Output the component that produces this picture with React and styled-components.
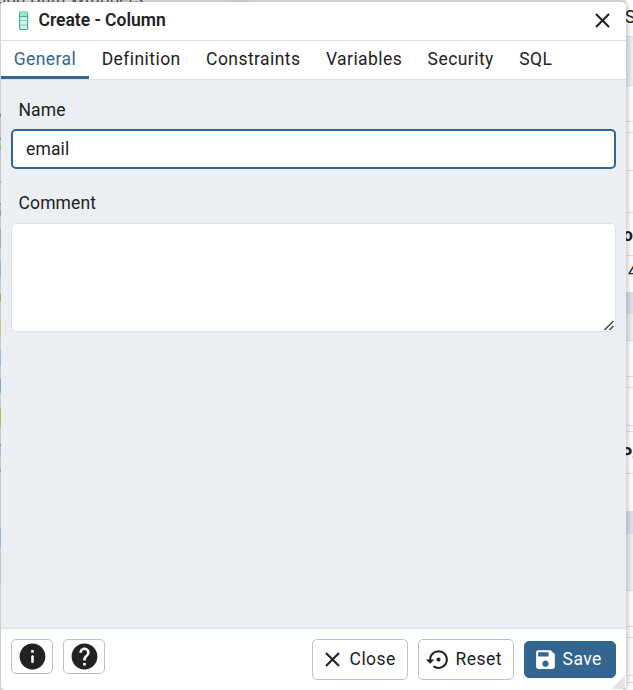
import React from 'react';
import styled, { createGlobalStyle, css } from 'styled-components';
import { MdClose, MdSettingsBackupRestore, MdSave, MdHelp } from 'react-icons/md';

const Global = createGlobalStyle`
  *, *::before, *::after { box-sizing: border-box; }
  html, body { margin: 0; height: 690px; overflow: hidden; background: #fff; }
  body, button, input, textarea {
    font-family: Roboto, sans-serif;
    font-size: 17.5px;
    letter-spacing: 0.13px;
    color: #222;
  }
`;

const Screen = styled.div`
  position: relative;
  width: 633px;
  height: 690px;
  overflow: hidden;
  background: #fff;
`;

const Workspace = styled.div`
  display: grid;
  grid-template-columns: 225px 25px 1fr 7px;
  height: 690px;
`;

const Tree = styled.div`
  height: 690px;
  overflow: hidden;
  background: linear-gradient(#e6e6e6 110px, #d8d9db 110px 114px, #999 114px 117px, #d8d9db 117px 137px,
    #aaa 137px 140px, #d8d9db 140px 145px, #b1ca77 145px 149px, #c5d7e7 149px 157px, #ddd 157px 181px,
    #eaa5a5 181px 183px, #ddd 183px 203px, #e09a9a 203px 205px, #c5cfdd 205px 210px, #bba992 210px 216px,
    #ddd 216px 229px, #bbb 229px 248px, #ddd 248px 261px, #a5cadf 261px 277px, #ddd 277px 294px,
    #a7c272 294px 301px, #ddd 301px 319px, #e2d684 319px 336px, #ddd 336px 350px, #abcce6 350px 366px,
    #ddd 366px 379px, #92bfcd 379px 393px, #ddd 393px 408px, #bdd66c 408px 427px, #ddd 427px 444px,
    #aaa 444px 446px, #c6d0de 446px 457px, #ddd 457px 469px, #9dbecc 469px 472px, #d0e2de 472px 485px,
    #ddd 485px 528px, #a7cbe6 528px 547px, #ddd 547px 551px, #cfdde1 551px 584px, #e3e3e3 584px);
`;

const TreeLabel = styled.div`
  margin: -12px 0 0 -7px;
  font-size: 17px;
  line-height: 20px;
  white-space: nowrap;
  color: #555;
`;

const Splitter = styled.div`
  background: #dedfe3;
`;

const Canvas = styled.div`
  background: #e8e8e8;
`;

const Properties = styled.div`
  overflow: hidden;
`;

const PropertyRow = styled.div`
  display: flex;
  align-items: center;
  height: ${({ $h }) => $h}px;
  padding-top: ${({ $drop }) => $drop || 0}px;
  padding-bottom: ${({ $lift }) => $lift || 0}px;
  border-bottom: 1px solid #dde0e6;
  background: ${({ $bg }) => $bg || '#fff'};
  font-weight: ${({ $bold }) => ($bold ? 700 : 400)};
  text-indent: ${({ $shift }) => $shift || 0}px;
  line-height: 20px;
  white-space: nowrap;
`;

const Dialog = styled.section`
  position: absolute;
  left: 1px;
  top: 2px;
  width: 625px;
  height: 688px;
  display: flex;
  flex-direction: column;
  overflow: hidden;
  border-radius: 5px;
  background: #ebeef3;
`;

const DialogShadow = styled.div`
  position: absolute;
  left: 1px;
  top: 2px;
  width: 625px;
  height: 688px;
  border-radius: 5px;
  box-shadow: 1px 0 6px rgba(0, 0, 0, 0.28);
`;

const Header = styled.header`
  display: flex;
  align-items: center;
  height: 39px;
  padding: 0 16px 1px 17px;
  background: #fff;
  border-bottom: 1px solid #dde0e6;
`;

const Title = styled.h1`
  flex: 1;
  margin: -1px 0 0 9.5px;
  font-size: 17.5px;
  font-weight: 600;
  letter-spacing: -0.02px;
`;

const IconButton = styled.button`
  display: flex;
  padding: 0;
  border: 0;
  background: none;
  margin-right: -4.5px;
  svg { width: 25px; height: 25px; }
`;

const TabBar = styled.nav`
  display: flex;
  height: 39px;
  background: #fff;
  border-bottom: 1px solid #dde0e6;
`;

const Tab = styled.button`
  height: 38px;
  padding: 2px 12.7px 0;
  border: 0;
  border-bottom: 3px solid transparent;
  background: none;
  line-height: 33px;
  letter-spacing: 0.44px;
  ${({ $active }) => $active && css`
    color: #326690;
    border-color: #326690;
  `}
`;

const Form = styled.main`
  flex: 1;
  display: flex;
  flex-direction: column;
  padding: 17px 10px 0;
`;

const Label = styled.label`
  height: 32px;
  padding: 3px 7.5px 0;
  line-height: 20px;
`;

const TextInput = styled.input`
  height: 40px;
  margin-bottom: 21px;
  padding: 0 13px;
  border: 2px solid #326690;
  border-radius: 5px;
  background: #fff;
  outline: 0;
`;

const CommentBox = styled.div`
  display: flex;
  align-items: flex-end;
  justify-content: flex-end;
  height: 109px;
  margin-top: 1px;
  border: 1px solid #dde0e6;
  border-radius: 5px;
  background: #fff;
`;

const Footer = styled.footer`
  display: flex;
  height: 62px;
  padding: 10px 10px 0;
  gap: 10px;
  border-top: 1px solid #dde0e6;
  background: #fff;
`;

const HelpButton = styled.button`
  display: flex;
  align-items: center;
  justify-content: center;
  width: 42px;
  height: 35px;
  padding: 0;
  border: 1px solid #bac1cd;
  border-radius: 5px;
  background: #fff;
  svg { width: 31px; height: 31px; flex: none; }
`;

const ActionButton = styled.button`
  display: flex;
  align-items: center;
  width: ${({ $w }) => $w}px;
  height: ${({ $primary }) => ($primary ? 37 : 41)}px;
  margin-top: ${({ $primary }) => ($primary ? 2 : 0)}px;
  padding: 0 0 1px ${({ $primary }) => ($primary ? 8 : 7)}px;
  gap: 4.6px;
  border: 1px solid ${({ $primary }) => ($primary ? '#326690' : '#bac1cd')};
  border-radius: 5px;
  background: ${({ $primary }) => ($primary ? '#326690' : '#fff')};
  color: ${({ $primary }) => ($primary ? '#fff' : '#222')};
  letter-spacing: 0.42px;
  svg { width: 25px; height: 25px; flex: none; }
`;

const Spacer = styled.div`
  flex: 1;
`;

const ResizeCorner = styled.div`
  position: absolute;
  right: 1px;
  bottom: 1px;
  width: 13px;
  height: 13px;
  background: linear-gradient(135deg, transparent 50%, #e3e3e3 50%);
`;

const ColumnIcon = () => (
  <svg width="11" height="20" viewBox="0 0 11 20">
    <rect x="1.6" y="1" width="8" height="17.5" rx="1" fill="#d3f2ea" stroke="#34b495" strokeWidth="1.2" />
    <path d="M2 1.5h7.2v3.5h-7.2z" fill="#a5e1d1" />
    <path d="M1.6 5.5h8" stroke="#34b495" strokeWidth="1.2" />
    <path d="M2 9.5h7.2M2 14h7.2" stroke="#7bd0bb" strokeWidth="1" />
  </svg>
);

const InfoIcon = () => (
  <svg viewBox="0 0 24 24" fill="currentColor">
    <path d="M12 2C6.48 2 2 6.48 2 12s4.48 10 10 10 10-4.48 10-10S17.52 2 12 2zm0 15c-.55 0-1-.45-1-1v-4c0-.55.45-1 1-1s1 .45 1 1v4c0 .55-.45 1-1 1zm1-8h-2V7h2v2z" />
  </svg>
);

const Grip = () => (
  <svg width="13" height="13" viewBox="0 0 13 13" stroke="#444" strokeWidth="1.5">
    <path d="M2.5 12L11.5 3M7.5 12L11.5 8" />
  </svg>
);

const rows = [
  { h: 37, text: 'S', lift: 2, shift: -1 },
  { h: 49, bg: '#ebeef3' },
  { h: 36 }, { h: 11 }, { h: 38 }, { h: 42 },
  { h: 43, text: 'on', bold: true, shift: -3, drop: 2 },
  { h: 37, text: '4', shift: 2, lift: 6 },
  { h: 21, bg: '#dde0e6' },
  { h: 27, bg: '#ebeef3' },
  { h: 36 }, { h: 11 }, { h: 38 }, { h: 6 },
  { h: 42, text: 'Pa', bold: true, shift: -5, drop: 2 },
  { h: 38 },
  { h: 22, bg: '#dde0e6' },
  { h: 57, bg: '#ebeef3' },
  { h: 36 }, { h: 11 }, { h: 38 }, { h: 7 }, { h: 20 },
];

const tabs = ['General', 'Definition', 'Constraints', 'Variables', 'Security', 'SQL'];

export default function App() {
  return (
    <Screen>
      <Global />
      <Workspace>
        <Tree><TreeLabel>eign Data Wrappers</TreeLabel></Tree>
        <Splitter />
        <Canvas />
        <Properties>
          {rows.map((r, i) => (
            <PropertyRow key={i} $h={r.h} $bg={r.bg} $bold={r.bold} $shift={r.shift} $lift={r.lift} $drop={r.drop}>{r.text}</PropertyRow>
          ))}
        </Properties>
      </Workspace>
      <DialogShadow />
      <Dialog>
        <Header>
          <ColumnIcon />
          <Title>Create - Column</Title>
          <IconButton aria-label="Close dialog"><MdClose /></IconButton>
        </Header>
        <TabBar>
          {tabs.map((t, i) => <Tab key={t} $active={i === 0}>{t}</Tab>)}
        </TabBar>
        <Form>
          <Label htmlFor="name">Name</Label>
          <TextInput id="name" defaultValue="email" />
          <Label>Comment</Label>
          <CommentBox><Grip /></CommentBox>
        </Form>
        <Footer>
          <HelpButton aria-label="Info"><InfoIcon /></HelpButton>
          <HelpButton aria-label="Help"><MdHelp /></HelpButton>
          <Spacer />
          <ActionButton $w={96}><MdClose />Close</ActionButton>
          <ActionButton $w={96}><MdSettingsBackupRestore />Reset</ActionButton>
          <ActionButton $w={92} $primary><MdSave />Save</ActionButton>
        </Footer>
        <ResizeCorner />
      </Dialog>
    </Screen>
  );
}
